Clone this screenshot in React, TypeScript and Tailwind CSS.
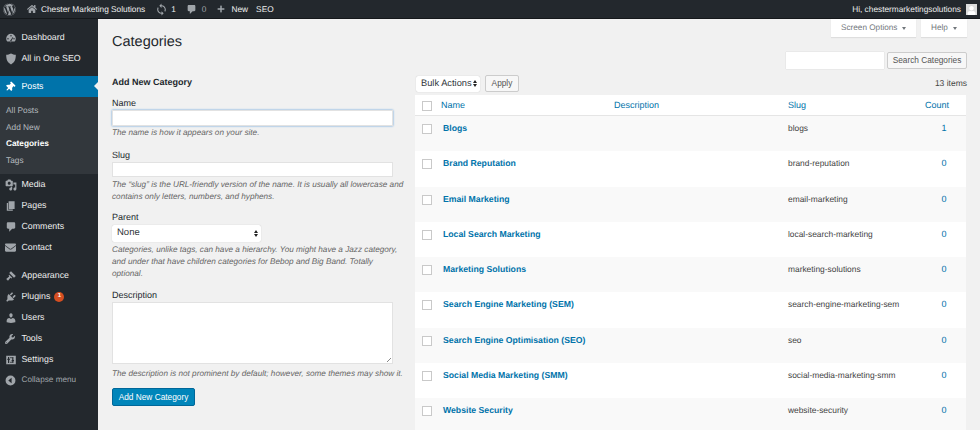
import React from "react";
import { FaWordpress, FaThumbtack, FaUser, FaWrench, FaEnvelope, FaHome, FaPlus } from "react-icons/fa";
import { MdOutlineSync } from "react-icons/md";

// dashicon style glyphs on a 20x20 grid
const Dash = ({ d, size = 12, className = "" }: { d: string; size?: number; className?: string }) => (
  <svg viewBox="0 0 20 20" width={size} height={size} className={"fill-current " + className}>
    <path fillRule="evenodd" d={d} />
  </svg>
);

const paths = {
  shield: "M10 1c3 1.500 5 2 8 2 0 8-2 13-8 16C4 16 2 11 2 3c3 0 5-.5 8-2z",
  gauge: "M10 3a8 8 0 0 0-8 8c0 2 .7 3.800 2 5h12c1.300-1.200 2-3 2-5a8 8 0 0 0-8-8zm0 2a1.200 1.200 0 1 1 0 2.400A1.200 1.200 0 0 1 10 5zM5 10a1.200 1.200 0 1 1 0 2.400A1.200 1.200 0 0 1 5 10zm10 0a1.200 1.200 0 1 1 0 2.400 1.200 1.200 0 0 1 0-2.400zm-4.200 4.500a1.500 1.500 0 1 1-1.800-.4L13 8.500l.8.5z",
  media: "M13 11V4c0-.55-.45-1-1-1h-1.670L9 1H5L3.670 3H2c-.55 0-1 .45-1 1v7c0 .55.45 1 1 1h10c.55 0 1-.45 1-1zM7 4.500c1.380 0 2.500 1.120 2.500 2.500S8.380 9.500 7 9.500 4.500 8.380 4.500 7 5.620 4.500 7 4.500zM14 6h5v10.500c0 1.380-1.120 2.500-2.500 2.500S14 17.880 14 16.500s1.120-2.500 2.500-2.500c.17 0 .34.020.5.050V9h-3V6zm-4 8.050V13h2v3.500c0 1.380-1.120 2.500-2.500 2.500S7 17.880 7 16.500 8.120 14 9.500 14c.17 0 .34.020.5.050z",
  pages: "M6 15V2h10v13H6zm-1 1h8v2H3V5h2v11z",
  comment: "M5 2h10c1.100 0 2 .9 2 2v7c0 1.100-.9 2-2 2h-3l-5 5v-5H5c-1.100 0-2-.9-2-2V4c0-1.100.9-2 2-2z",
  brush: "M10 2l8 8-3 3-8-8zM7 8l5 5-1 1-2-1-4 5-3-3 5-4-1-2z",
  plugin: "M13.110 4.360L9.870 7.600 8 5.730l3.240-3.240c.35-.34 1.050-.2 1.560.32.52.51.66 1.210.31 1.550zm-8 1.770l.91-1.120 9.010 9.010-1.190.84c-.71.71-2.630 1.160-3.820 1.160H6.140L4.900 17.260c-.59.59-1.540.59-2.120 0-.59-.58-.59-1.530 0-2.120l1.240-1.240v-3.880c0-1.130.4-3.050 1.090-3.890zm7.260 3.970l3.240-3.240c.34-.35 1.040-.21 1.550.31.52.51.66 1.210.31 1.550l-3.240 3.250z",
  users: "M10 9.250c-2.270 0-2.730-3.440-2.730-3.440C7 4.020 7.820 2 9.970 2c2.160 0 2.980 2.020 2.710 3.810 0 0-.41 3.440-2.680 3.440zm0 2.570L12.720 10c2.390 0 4.520 2.330 4.520 4.530v2.490s-3.650 1.130-7.240 1.130c-3.650 0-7.240-1.130-7.240-1.130v-2.490c0-2.250 1.940-4.530 4.460-4.530z",
  sliders: "M2 3h16v14H2zM5 5v3H4v2h1v5h2v-5h1V8H7V5zm7 0v5h-1v2h1v3h2v-3h1v-2h-1V5zm-3 0v2h2V5zm0 8v2h2v-2z",
  collapse: "M10 1a9 9 0 1 1 0 18 9 9 0 0 1 0-18zm2 4-6 5 6 5z",
};

const Caret = () => <span className="w-0 h-0 border-x-[2.5px] border-x-transparent border-t-[3.5px] border-t-[#72777c]" />;

const topMenu = [
  { label: "Dashboard", icon: <Dash d={paths.gauge} /> },
  { label: "All in One SEO", icon: <Dash d={paths.shield} /> },
];
const midMenu = [
  { label: "Media", icon: <Dash d={paths.media} /> },
  { label: "Pages", icon: <Dash d={paths.pages} /> },
  { label: "Comments", icon: <Dash d={paths.comment} /> },
  { label: "Contact", icon: <FaEnvelope size={11} /> },
];
const lowMenu = [
  { label: "Appearance", icon: <Dash d={paths.brush} /> },
  { label: "Plugins", icon: <Dash d={paths.plugin} />, badge: "1" },
  { label: "Users", icon: <Dash d={paths.users} /> },
  { label: "Tools", icon: <FaWrench size={10} /> },
  { label: "Settings", icon: <Dash d={paths.sliders} /> },
];

const categories = [
  { name: "Blogs", slug: "blogs", count: 1 },
  { name: "Brand Reputation", slug: "brand-reputation", count: 0 },
  { name: "Email Marketing", slug: "email-marketing", count: 0 },
  { name: "Local Search Marketing", slug: "local-search-marketing", count: 0 },
  { name: "Marketing Solutions", slug: "marketing-solutions", count: 0 },
  { name: "Search Engine Marketing (SEM)", slug: "search-engine-marketing-sem", count: 0 },
  { name: "Search Engine Optimisation (SEO)", slug: "seo", count: 0 },
  { name: "Social Media Marketing (SMM)", slug: "social-media-marketing-smm", count: 0 },
  { name: "Website Security", slug: "website-security", count: 0 },
];

const MenuItem = ({ label, icon, badge }: { label: string; icon: React.ReactNode; badge?: string }) => (
  <div className="flex items-center h-[21px] pl-[5px] text-[#eeeeee] text-[8.8px]">
    <span className="w-[16.5px] flex text-[#a0a5aa]">{icon}</span>
    <span>{label}</span>
    {badge && (
      <span className="ml-[4px] w-[10px] h-[10px] rounded-full bg-[#d54e21] text-white text-[6px] font-bold flex items-center justify-center">
        {badge}
      </span>
    )}
  </div>
);

const Check = () => <span className="block w-[10px] h-[10px] bg-white border border-[#c9c9c9] shrink-0" />;

const Select = ({ label, className }: { label: string; className: string }) => (
  <div className={"flex items-center justify-between bg-white rounded-[2px] shadow-[0_0_1px_rgba(0,0,0,0.25)] text-[#32373c] " + className}>
    <span>{label}</span>
    <span className="flex flex-col gap-[1px]">
      <span className="w-0 h-0 border-x-[2px] border-x-transparent border-b-[3px] border-b-[#222]" />
      <span className="w-0 h-0 border-x-[2px] border-x-transparent border-t-[3px] border-t-[#222]" />
    </span>
  </div>
);

const Hint = ({ children, className }: { children: React.ReactNode; className: string }) => (
  <p className={"italic text-[#666] text-[8.2px] leading-[12px] w-[292.5px] " + className}>{children}</p>
);
const Field = "block w-[281px] bg-white border border-[#e2e2e2]";

export default function App() {
  return (
    <div className="w-[980px] h-[430px] overflow-hidden bg-[#f1f1f1] text-[9px] text-[#444] font-['Liberation_Sans',Arial,sans-serif] [text-rendering:geometricPrecision] flex flex-col">
      <header className="h-[19px] shrink-0 bg-[#23282d] text-[#eeeeee] flex items-center text-[8.3px] pl-[3px] pr-[3px] border-b border-[#15181b]">
        <FaWordpress size={13} className="text-[#a0a5aa]" />
        <FaHome size={10} className="ml-[11px] text-[#a0a5aa]" />
        <span className="ml-[4px]">Chester Marketing Solutions</span>
        <MdOutlineSync size={13} className="ml-[10px] text-[#a0a5aa]" />
        <span className="ml-[3px]">1</span>
        <Dash d={paths.comment} size={11} className="ml-[10px] text-[#a0a5aa]" />
        <span className="ml-[5px] text-[#a0a5aa]">0</span>
        <FaPlus size={8} className="ml-[11px] text-[#a0a5aa]" />
        <span className="ml-[6px]">New</span>
        <span className="ml-[8px]">SEO</span>
        <span className="ml-auto">Hi, chestermarketingsolutions</span>
        <span className="ml-[5px] w-[11px] h-[11px] bg-[#dcdcdc] flex items-end justify-center overflow-hidden">
          <FaUser size={9} className="text-white" />
        </span>
      </header>

      <div className="flex flex-1 min-h-0">
        <aside className="w-[98px] shrink-0 bg-[#23282d] pt-[8px]">
          {topMenu.map((m) => <MenuItem key={m.label} {...m} />)}
          <div className="relative mt-[7px] h-[21px] bg-[#0073aa] text-white flex items-center pl-[5px] text-[8.8px]">
            <span className="w-[16.5px] flex"><FaThumbtack size={10} className="rotate-45" /></span>
            <span>Posts</span>
            <span className="absolute right-0 top-[6px] w-0 h-0 border-y-[4px] border-y-transparent border-r-[4px] border-r-[#f1f1f1]" />
          </div>
          <div className="bg-[#32373c] h-[77px] pt-[5px] pl-[6px] text-[#b4b9be] text-[8.3px] leading-[16.7px]">
            <div>All Posts</div>
            <div>Add New</div>
            <div className="font-bold text-white">Categories</div>
            <div>Tags</div>
          </div>
          {midMenu.map((m) => <MenuItem key={m.label} {...m} />)}
          <div className="h-[7px]" />
          {lowMenu.map((m) => <MenuItem key={m.label} {...m} />)}
          <div className="flex items-center h-[21px] pl-[5px] text-[#a0a5aa] text-[8.2px]">
            <span className="w-[16.5px] flex"><Dash d={paths.collapse} size={11} /></span>
            <span>Collapse menu</span>
          </div>
        </aside>

        <main className="flex-1 min-w-0 flex flex-col pl-[14px] pr-[13px]">
          <div className="flex justify-end gap-[5px] h-[18px] text-[8.2px] text-[#72777c]">
            <div className="flex items-center gap-[5px] bg-white pl-[10px] w-[85px] shadow-[0_1px_1px_rgba(0,0,0,0.08)]">
              Screen Options <Caret />
            </div>
            <div className="flex items-center gap-[5px] bg-white pl-[10px] w-[46px] shadow-[0_1px_1px_rgba(0,0,0,0.08)]">
              Help <Caret />
            </div>
          </div>

          <div className="flex flex-1 min-h-0">
            <section className="w-[303px] shrink-0">
              <h1 className="text-[14.5px] leading-[18px] text-[#23282d] -mt-[4px]">Categories</h1>
              <h2 className="mt-[25px] font-bold text-[9px] leading-[12px] text-[#23282d]">Add New Category</h2>
              <label className="block mt-[9px] leading-[12px] text-[#23282d]">Name</label>
              <div className={Field + " mt-[1px] h-[16px] border-[#7eb4d6] shadow-[0_0_2px_#5b9dd9]"} />
              <Hint className="mt-[1px]">The name is how it appears on your site.</Hint>
              <label className="block mt-[10px] leading-[12px] text-[#23282d]">Slug</label>
              <div className={Field + " mt-[1px] h-[15px]"} />
              <Hint className="mt-[2px]">The “slug” is the URL-friendly version of the name. It is usually all lowercase and contains only letters, numbers, and hyphens.</Hint>
              <label className="block mt-[8px] leading-[12px] text-[#23282d]">Parent</label>
              <Select label="None" className="mt-[2px] w-[149px] h-[17px] pl-[5px] pr-[3px] text-[9.5px]" />
              <Hint className="mt-[2px]">Categories, unlike tags, can have a hierarchy. You might have a Jazz category, and under that have children categories for Bebop and Big Band. Totally optional.</Hint>
              <label className="block mt-[9px] leading-[12px] text-[#23282d]">Description</label>
              <div className={Field + " relative mt-[1px] h-[62px]"}>
                <span className="absolute right-[1px] bottom-[1px] w-[4px] h-[4px] bg-[linear-gradient(135deg,transparent_50%,#888_50%,#888_60%,transparent_60%)]" />
              </div>
              <Hint className="mt-[4px] whitespace-nowrap">The description is not prominent by default; however, some themes may show it.</Hint>
              <button className="mt-[8px] h-[18px] w-[83px] rounded-[2px] bg-[#0085ba] border border-[#006799] text-white text-[8.3px]">Add New Category</button>
            </section>

            <section className="flex-1 min-w-0">
              <div className="flex justify-end h-[17px] mt-[15px]">
                <div className="w-[98px] bg-white shadow-[0_0_1px_rgba(0,0,0,0.2)]" />
                <button className="w-[80px] ml-[3px] h-[17px] rounded-[2px] bg-[#f7f7f7] border border-[#ccc] text-[#555] text-[8.3px]">Search Categories</button>
              </div>
              <div className="flex items-center mt-[6px] h-[17px] pl-[1px]">
                <Select label="Bulk Actions" className="w-[64px] h-[16px] pl-[5px] pr-[3px] text-[9.3px]" />
                <button className="ml-[5px] w-[34px] h-[17px] rounded-[2px] bg-[#f7f7f7] border border-[#ccc] text-[#555] text-[8.3px]">Apply</button>
                <span className="ml-auto text-[8.5px] text-[#444]">13 items</span>
              </div>
              <div className="w-[551px] mt-[3px] bg-white">
                <div className="h-[21px] flex items-center pl-[7px] pt-[1px] text-[#0073aa] border-b border-[#e5e5e5]">
                  <Check />
                  <span className="w-[173px] ml-[9px]">Name</span>
                  <span className="w-[174px]">Description</span>
                  <span className="w-[137px]">Slug</span>
                  <span>Count</span>
                </div>
                {categories.map((c, i) => (
                  <div key={c.name} className={"h-[35.3px] flex items-start pt-[6px] pl-[7px] " + (i % 2 === 0 ? "bg-[#f9f9f9]" : "bg-white")}>
                    <span className="mt-[2px]"><Check /></span>
                    <span className="w-[345px] ml-[11px] font-bold text-[#0073aa] text-[8.7px]">{c.name}</span>
                    <span className="w-[150px] text-[#444] text-[8.4px]">{c.slug}</span>
                    <span className="w-[12px] text-center text-[#0073aa]">{c.count}</span>
                  </div>
                ))}
              </div>
            </section>
          </div>
        </main>
      </div>
    </div>
  );
}
